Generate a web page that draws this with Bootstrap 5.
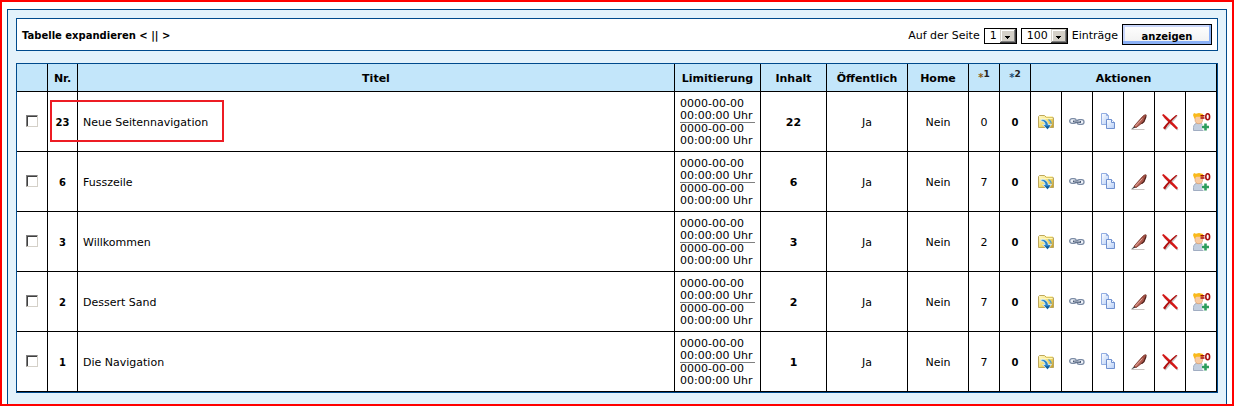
<!DOCTYPE html>
<html lang="de">
<head>
<meta charset="utf-8">
<meta name="viewport" content="width=device-width, initial-scale=1">
<title>Navigation</title>
<link href="https://cdn.jsdelivr.net/npm/bootstrap@5.3.0/dist/css/bootstrap.min.css" rel="stylesheet">
<style>
body { font: 11px/14px Verdana, "DejaVu Sans", sans-serif; color: #000; border: 2px solid #f00; }
.panel { background: #e3f2fb; border: 1px solid #004a8c; border-bottom: 0; margin: 7px 5px 0; padding: 8px; }
.toolbar { background: #fff; border: 1px solid #004a8c; padding: 5px; margin-bottom: 12px; }
.toolbar strong { font-size: 10px; padding-top: 2px; }
.toolbar label { padding-top: 3px; }
.pick { appearance: none; height: 16px; margin-top: 3px; border: 1px solid #000; border-radius: 0; padding: 0 0 0 5px; font-size: 11px; line-height: 14px; color: #000;
  background: #fff url("data:image/svg+xml,%3Csvg xmlns='http://www.w3.org/2000/svg' width='16' height='14' shape-rendering='crispEdges'%3E%3Cpath fill='%23404040' d='M0 0h16v14H0z'/%3E%3Cpath fill='%23d4d0c8' d='M0 0h15v13H0z'/%3E%3Cpath fill='%23808080' d='M14 1h1v12H1v-1h13z'/%3E%3Cpath fill='%23fff' d='M1 1h13v1H2v10H1z'/%3E%3Cpath d='M5 7h5v1H9v1H8v1H7V9H6V8H5z'/%3E%3C/svg%3E") no-repeat right center; }
.pick-page { width: 33px; }
.pick-count { width: 47px; }
.show-btn { width: 90px; height: 21px; border: 1px solid #000; padding: 4px 0 0;
  background: linear-gradient(#fff, #f0f0f0);
  box-shadow: inset -2px -3px #8ab0f6, inset 2px 2px #c9d6fb; font-size: 10px; font-weight: bold; line-height: 15px; color: #000; }
.grid-frame { border: 1px solid #004a8c; background: #fff; }
.grid-table { width: 100%; table-layout: fixed; border-collapse: separate; border-spacing: 0; text-align: center; }
.grid-table th, .grid-table td { border: 0 solid #000; border-width: 0 1px 1px 0; padding: 2px 0 0; vertical-align: middle; }
.grid-table th { height: 28px; background: #c3e6fa; text-align: center; font-size: 11px; }
.grid-table td { height: 60px; }
.grid-table td.title-cell { text-align: left; padding-left: 5px; }
.grid-table td.limit-cell { text-align: left; padding-left: 5px; line-height: 12px; white-space: nowrap; }
.limit-from { border-bottom: 1px solid #808080; margin-right: 5px; }
.grid-table td.small-bold { font-size: 10px; font-weight: bold; }
.grid-table td.tool-cell { padding: 0; }
.grid-table td.tick-cell { padding: 0 0 2px; }
.grid-table th.star { font-size: 10px; color: #1d4f7c; padding: 0; }
.star a { color: inherit; text-decoration: none; }
.star sup { font-size: 9px; top: -4px; color: #222; }
.grid-table .star-gold { color: #8a5c14; }
.tick { appearance: none; display: block; width: 12px; height: 12px; margin: 0 auto; background: #fff; border: 1px solid; border-color: #808080 #d4d0c8 #d4d0c8 #808080; box-shadow: inset 1px 1px #404040; }
.tick:checked { background: #404040; }
.icon-btn { border: 0; padding: 0; background: none; display: block; margin: 0 auto; }
.icon-btn svg { display: block; }
.marker { left: 2px; top: 8px; width: 174px; height: 42px; border: 2px solid #ed1c24; pointer-events: none; }
.c-tick { width: 31px; } .c-nr { width: 30px; } .c-limit { width: 86px; } .c-inhalt { width: 66px; }
.c-public { width: 81px; } .c-home { width: 61px; } .c-act { width: 31px; }
</style>
<script src="https://cdn.jsdelivr.net/npm/bootstrap@5.3.0/dist/js/bootstrap.bundle.min.js"></script>
</head>
<body class="d-flex flex-column min-vh-100 bg-white">
<svg width="0" height="0" class="position-absolute" aria-hidden="true">
  <defs>
    <linearGradient id="gold" x2="1" y2="1"><stop stop-color="#fffbd0"/><stop offset=".5" stop-color="#f5df72"/><stop offset="1" stop-color="#c19a2c"/></linearGradient>
    <linearGradient id="sheet" x2="1" y2="1"><stop stop-color="#fff"/><stop offset="1" stop-color="#b4cdf6"/></linearGradient>
    <linearGradient id="wood" x1="1" x2="0" y2="1"><stop stop-color="#9b4a3e"/><stop offset="1" stop-color="#c06a5c"/></linearGradient>
    <symbol id="i-folder" viewBox="0 0 18 18">
      <path d="M1.500 14.500v-11l1-1h5l1.500 1.500h6.500l1 1v9.500z" fill="url(#gold)" stroke="#bda75c"/>
      <path d="M2.500 5.500h13M9 3.500h6" stroke="#fff6b8" fill="none"/>
      <path d="M4 6.500c4-.6 7 1.500 7.200 5h3.300L10.500 16.500l-5-4.800h2.600C8 9.500 6.500 8 4 8z" fill="#2c84c6" stroke="#e2f5ff" stroke-width=".8"/>
      <path d="M11.500 6.500c2 1 2.500 2 2.800 4" stroke="#4b9bd5" stroke-width="1.300" fill="none"/>
      <path d="M8 13.300l2.500 2.700 2.500-2.700" fill="#145a96"/>
    </symbol>
    <symbol id="i-link" viewBox="0 0 18 18">
      <rect x="1.700" y="5.700" width="6.600" height="4.600" rx="2.300" fill="#eef2f8" stroke="#7b8ba5" stroke-width="1.300"/>
      <rect x="9" y="6.700" width="7" height="4.600" rx="2.300" fill="#eef2f8" stroke="#7b8ba5" stroke-width="1.300"/>
      <path d="M5 8.300l8 .7" stroke="#4a5a75" stroke-width="1.800"/><path d="M6 8.200l6 .4" stroke="#d6deea" stroke-width=".6"/>
    </symbol>
    <symbol id="i-copy" viewBox="0 0 18 18">
      <path d="M2.500 .5h5l2 2v9h-7z" fill="url(#sheet)" stroke="#93aee2"/><path d="M7.500 .5v2h2" fill="none" stroke="#93aee2"/>
      <path d="M7.500 6.500h5l3 3v6h-8z" fill="url(#sheet)" stroke="#6f90d0"/><path d="M12.500 6.500v3h3" fill="#fff" stroke="#6f90d0"/>
    </symbol>
    <symbol id="i-pen" viewBox="0 0 18 18">
      <path d="M1.500 16.500h13" stroke="#c9c4c2"/>
      <path d="M1.300 16.200l3-3.200 1.600 1.400z" fill="#444"/>
      <path d="M4 13.200L12.500 3.500C14 1.800 17.300.5 16 3.500L13.500 9 6 14.700z" fill="url(#wood)" stroke="#6f2a20" stroke-width=".7"/>
      <path d="M16 3.500l-2 5.200-2.500 2" fill="none" stroke="#4f231d" stroke-width="1.200"/>
      <path d="M5.500 13l7-7.500" stroke="#f0c2b6" stroke-width=".8"/>
    </symbol>
    <symbol id="i-cross" viewBox="0 0 18 18">
      <path d="M3 4l14 13M16 3L4 17" stroke="#c9c9c9" stroke-width="1.500"/>
      <path d="M1 2l1.500-1C7 5 12 9.500 17 15L15.500 16.500C10 11.500 5 7 1 2z" fill="#d31717"/>
      <path d="M15 2l1.500.3C11 7.500 7 11.500 4 16.500L2 15C6 9.500 10 6 15 2z" fill="#b01010"/>
    </symbol>
    <symbol id="i-user" viewBox="0 0 20 20">
      <path d="M2.500 18.500v-3c0-3 2-4.500 5-4.500s5 1.500 5 4.500v3z" fill="#c3cede" stroke="#a0adc2"/>
      <ellipse cx="7.800" cy="7.500" rx="3.800" ry="4.200" fill="#f8caa0" stroke="#d89660" stroke-width=".6"/>
      <path d="M2 3l1-2 2 .8L8 1l4 1 .6 4-2-1.200H5L3.500 7z" fill="#f9b91b"/>
      <path d="M11 15h7M14.500 11.500v7" stroke="#fff" stroke-width="5"/>
      <path d="M11 15h7M14.500 11.500v7" stroke="#2c9d5c" stroke-width="2.600"/>
      <path d="M9.500 3.700h4M9.500 6h4" stroke="#a50d0d" stroke-width="1.400"/>
      <ellipse cx="16.700" cy="4.800" rx="1.900" ry="3" fill="#fff" stroke="#a50d0d" stroke-width="1.600"/>
    </symbol>
  </defs>
</svg>

<main class="panel flex-grow-1">
  <form class="toolbar d-flex align-items-center justify-content-between" onsubmit="return false">
    <strong>Tabelle expandieren &lt; || &gt;</strong>
    <div class="d-flex align-items-center gap-1">
      <label for="page">Auf der Seite</label>
      <select id="page" class="pick pick-page"><option>1</option></select>
      <select id="count" class="pick pick-count"><option>100</option></select>
      <label for="count">Einträge</label>
      <button type="submit" class="show-btn">anzeigen</button>
    </div>
  </form>

  <div class="grid-frame">
    <table class="grid-table">
      <colgroup>
        <col class="c-tick"><col class="c-nr"><col><col class="c-limit"><col class="c-inhalt"><col class="c-public"><col class="c-home">
        <col class="c-act"><col class="c-act"><col class="c-act"><col class="c-act"><col class="c-act"><col class="c-act"><col class="c-act"><col class="c-act">
      </colgroup>
      <thead>
        <tr>
          <th></th><th>Nr.</th><th>Titel</th><th>Limitierung</th><th>Inhalt</th><th>Öffentlich</th><th>Home</th>
          <th class="star"><a href="#" class="star-gold">*<sup>1</sup></a></th><th class="star"><a href="#">*<sup>2</sup></a></th>
          <th colspan="6">Aktionen</th>
        </tr>
      </thead>
      <tbody id="rows"></tbody>
    </table>
  </div>
</main>

<script>
const pages = [
  [23, 'Neue Seitennavigation', 22, 0],
  [6, 'Fusszeile', 6, 7],
  [3, 'Willkommen', 3, 2],
  [2, 'Dessert Sand', 2, 7],
  [1, 'Die Navigation', 1, 7]
];
const actions = [
  ['folder', 18, 'Öffnen'], ['link', 18, 'Verknüpfen'], ['copy', 18, 'Kopieren'],
  ['pen', 18, 'Bearbeiten'], ['cross', 18, 'Löschen'], ['user', 20, 'Benutzer zuweisen']
];
const icons = actions.map(([id, size, label]) =>
  `<td class="tool-cell"><button type="button" class="icon-btn" aria-label="${label}"><svg width="${size}" height="${size}"><use href="#i-${id}"/></svg></button></td>`).join('');
document.getElementById('rows').innerHTML = pages.map(([nr, title, content, first], i) => `
  <tr>
    <td class="tick-cell"><input type="checkbox" class="tick" aria-label="${title}"></td>
    <td class="small-bold position-relative">${nr}${i === 0 ? '<span class="marker position-absolute"></span>' : ''}</td>
    <td class="title-cell">${title}</td>
    <td class="limit-cell"><div class="limit-from">0000-00-00<br>00:00:00 Uhr</div><div>0000-00-00<br>00:00:00 Uhr</div></td>
    <td class="fw-bold">${content}</td>
    <td>Ja</td><td>Nein</td><td>${first}</td><td class="small-bold">0</td>${icons}
  </tr>`).join('');
</script>
</body>
</html>
